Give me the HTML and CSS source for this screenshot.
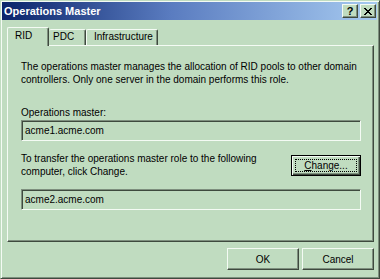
FILE: index.html
```html
<!DOCTYPE html>
<html lang="en">
<head>
  <meta charset="UTF-8"/>
  <title>Operations Master</title>
  <link rel="stylesheet" href="styles.css">
</head>
<body>
  <div class="window">
    <div class="titlebar">
      <span class="title">Operations Master</span>
      <div class="title-buttons">
        <button class="tbtn help">?</button>
        <button class="tbtn close">
          <svg width="8" height="7" viewBox="0 0 8 7" shape-rendering="crispEdges">
            <path d="M0 0h2v1H0z M6 0h2v1H6z M1 1h2v1H1z M5 1h2v1H5z M2 2h4v1H2z M3 3h2v1H3z M2 4h4v1H2z M1 5h2v1H1z M5 5h2v1H5z M0 6h2v1H0z M6 6h2v1H6z" fill="#000"/>
          </svg>
        </button>
      </div>
    </div>

    <div class="dialog">
      <div class="tabs">
        <div class="tab active rid">RID</div>
        <div class="tab pdc">PDC</div>
        <div class="tab infra">Infrastructure</div>
      </div>

      <div class="panel">
        <p class="intro">The operations master manages the allocation of RID pools to other domain<br>controllers. Only one server in the domain performs this role.</p>

        <div class="label">Operations master:</div>
        <div class="field">acme1.acme.com</div>

        <div class="transfer">
          <p>To transfer the operations master role to the following<br>computer, click Change.</p>
          <button class="btn default"><span class="focus"><u>C</u>hange...</span></button>
        </div>

        <div class="field second">acme2.acme.com</div>
      </div>

      <div class="footer">
        <button class="btn">OK</button>
        <button class="btn">Cancel</button>
      </div>
    </div>
  </div>
</body>
</html>
```

FILE: styles.css
```css
:root {
  --face: #c0dcc0;
  --light: #f4fbf4;
  --shadow: #7e8f7e;
  --dark: #3e4a3e;
}

* {
  box-sizing: border-box;
}

body {
  margin: 0;
  width: 380px;
  height: 279px;
  overflow: hidden;
  font-family: "Liberation Sans", Arial, sans-serif;
  font-size: 10px;
  color: #000;
  background: var(--face);
}

.window {
  width: 380px;
  height: 279px;
  background: var(--face);
  border: 1px solid;
  border-color: var(--face) var(--dark) var(--dark) var(--face);
  box-shadow: inset 1px 1px 0 var(--light), inset -1px -1px 0 var(--shadow);
  padding: 1px 2px 1px 1px;
}

/* Title bar */
.titlebar {
  height: 18px;
  display: flex;
  align-items: center;
  justify-content: space-between;
  padding: 0 1px 0 2px;
  background: linear-gradient(to right, #0a246a 0%, #5a7cc0 45%, #a6caf0 100%);
}

.title {
  color: #fff;
  font-weight: bold;
  font-size: 11px;
  white-space: nowrap;
}

.title-buttons {
  display: flex;
  gap: 2px;
}

.tbtn {
  width: 16px;
  height: 14px;
  padding: 0;
  margin: 0;
  font-family: "Liberation Sans", Arial, sans-serif;
  font-weight: bold;
  font-size: 11px;
  line-height: 12px;
  color: #000;
  background: var(--face);
  border: 1px solid;
  border-color: var(--light) var(--dark) var(--dark) var(--light);
  box-shadow: inset -1px -1px 0 var(--shadow);
  display: flex;
  align-items: center;
  justify-content: center;
}

.tbtn svg {
  display: block;
}

/* Dialog body */
.dialog {
  padding: 7px 3px 0 5px;
}

.tabs {
  display: flex;
  align-items: flex-end;
  height: 18px;
}

.tab {
  height: 16px;
  line-height: 14px;
  white-space: nowrap;
  background: var(--face);
  border-top: 1px solid var(--light);
  border-left: 1px solid var(--light);
  border-right: 1px solid var(--dark);
  border-radius: 2px 2px 0 0;
  box-shadow: inset -1px 0 0 var(--shadow);
}

.tab.active {
  height: 19px;
  line-height: 16px;
  margin-bottom: -1px;
  position: relative;
  z-index: 1;
}

.rid {
  width: 42px;
  padding-left: 7px;
}

.pdc {
  width: 37px;
  padding-left: 4px;
  border-left: none;
}

.infra {
  width: 72px;
  padding-left: 7px;
  border-left: 1px solid var(--light);
}

.panel {
  height: 197px;
  padding: 14px 12px 0 13px;
  border: 1px solid;
  border-color: var(--light) var(--dark) var(--dark) var(--light);
  box-shadow: inset -1px -1px 0 var(--shadow);
}

p {
  margin: 0;
  line-height: 13px;
  white-space: nowrap;
}

.label {
  margin-top: 20px;
  line-height: 13px;
}

.field {
  margin-top: 1px;
  height: 21px;
  display: flex;
  align-items: center;
  padding-left: 3px;
  border: 1px solid;
  border-color: var(--shadow) var(--light) var(--light) var(--shadow);
  box-shadow: inset 1px 1px 0 var(--dark);
}

.field.second {
  margin-top: 11px;
}

.transfer {
  margin-top: 11px;
  display: flex;
  justify-content: space-between;
  align-items: flex-start;
}

/* Push buttons */
.btn {
  width: 72px;
  height: 22px;
  padding: 0;
  margin: 0;
  font-family: "Liberation Sans", Arial, sans-serif;
  font-size: 10px;
  color: #000;
  background: var(--face);
  border: 1px solid;
  border-color: var(--light) var(--dark) var(--dark) var(--light);
  box-shadow: inset -1px -1px 0 var(--shadow);
}

.btn.default {
  width: 70px;
  height: 21px;
  margin-top: 3px;
  border: 1px solid #000;
  box-shadow: inset 1px 1px 0 var(--light), inset -1px -1px 0 var(--dark), inset -2px -2px 0 var(--shadow);
  display: flex;
  padding: 3px;
}

.focus {
  flex: 1;
  display: flex;
  align-items: center;
  justify-content: center;
  border: 1px dotted #000;
}

.footer {
  margin-top: 6px;
  display: flex;
  justify-content: flex-end;
  gap: 3px;
}
```
